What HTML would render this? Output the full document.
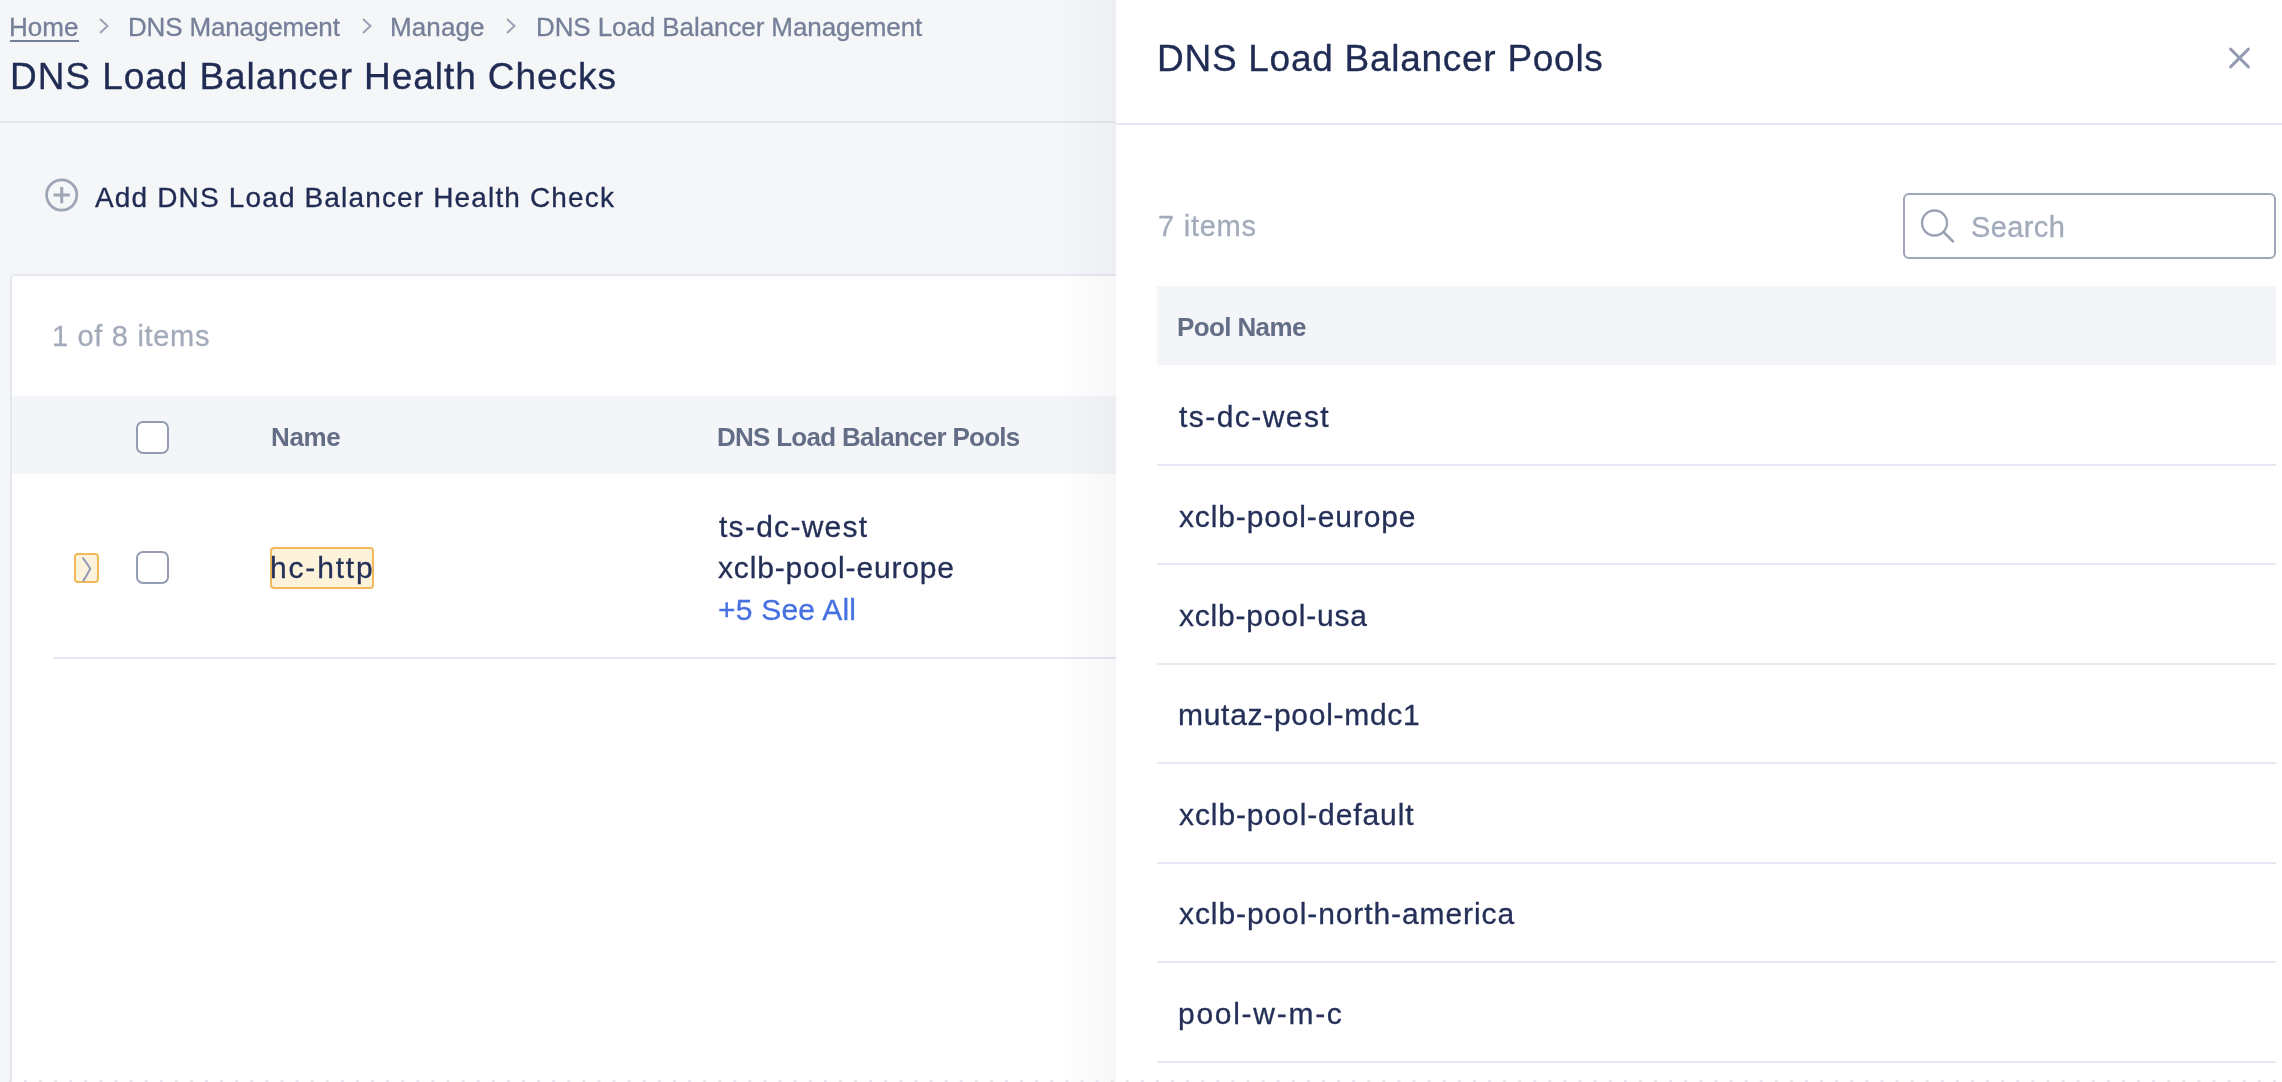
<!DOCTYPE html>
<html>
<head>
<meta charset="utf-8">
<style>
html,body{margin:0;padding:0;}
body{width:2282px;height:1082px;overflow:hidden;position:relative;background:#f5f6f8;font-family:"Liberation Sans",sans-serif;}
.t{position:absolute;white-space:nowrap;line-height:1;will-change:transform;}
.abs{position:absolute;}
.chev{position:absolute;}
#hdrline{left:0;top:121px;width:1116px;height:2px;background:#e4e7ef;}
#card{left:10px;top:274px;width:1200px;height:900px;background:#fff;border:2px solid #e4e7f0;border-radius:5px;box-sizing:border-box;}
#thead{left:12px;top:396px;width:1104px;height:78px;background:#f4f5f8;}
#rowline{left:53px;top:657px;width:1063px;height:2px;background:#e6e9f3;}
.cb{position:absolute;width:33px;height:33px;box-sizing:border-box;border:2px solid #939cb0;border-radius:7px;background:#fff;}
#exp{left:74px;top:553px;width:25px;height:30px;box-sizing:border-box;border:2px solid #f2b85c;border-radius:4px;background:#fdf2da;}
#hcbox{left:270px;top:547px;width:104px;height:42px;box-sizing:border-box;border:2px solid #f2b85c;border-radius:4px;background:#fdf2da;}
#shadow{left:1056px;top:0;width:60px;height:1082px;background:linear-gradient(to right,rgba(30,40,80,0),rgba(30,40,80,0.035));}
#panel{left:1116px;top:0;width:1166px;height:1082px;background:#fff;}
#pline{left:1116px;top:123px;width:1166px;height:2px;background:#e4e7f0;}
#sbox{left:1903px;top:193px;width:373px;height:66px;box-sizing:border-box;border:2px solid #9ea6b7;border-radius:6px;background:#fff;}
#pthead{left:1157px;top:286px;width:1119px;height:79px;background:#f4f5f8;}
.rl{position:absolute;left:1157px;width:1119px;height:2px;background:#e6e9f3;}
#dots{left:0;top:1080px;width:2282px;height:2px;background-image:linear-gradient(to right,#e6e8ed 0,#e6e8ed 3px,transparent 3px);background-size:15.1px 2px;background-position:24px 0;}
</style>
</head>
<body>
<!-- breadcrumb chevrons -->
<svg class="chev" style="left:97px;top:16px" width="14" height="20" viewBox="0 0 14 20"><path d="M3 3 L10.5 10 L3 17" fill="none" stroke="#9aa2b4" stroke-width="2"/></svg>
<svg class="chev" style="left:360px;top:16px" width="14" height="20" viewBox="0 0 14 20"><path d="M3 3 L10.5 10 L3 17" fill="none" stroke="#9aa2b4" stroke-width="2"/></svg>
<svg class="chev" style="left:504px;top:16px" width="14" height="20" viewBox="0 0 14 20"><path d="M3 3 L10.5 10 L3 17" fill="none" stroke="#9aa2b4" stroke-width="2"/></svg>
<div class="abs" style="left:10px;top:40px;width:69px;height:2px;background:#757f98"></div>
<div class="abs" id="hdrline"></div>
<!-- add icon -->
<svg class="abs" style="left:44px;top:177px" width="36" height="36" viewBox="0 0 36 36"><circle cx="17.7" cy="18" r="15.1" fill="none" stroke="#9ea6b6" stroke-width="2.8"/><path d="M17.7 10 V26.3 M9.6 18 H25.8" stroke="#9ea6b6" stroke-width="3"/></svg>
<div class="abs" id="card"></div>
<div class="abs" id="thead"></div>
<div class="cb" style="left:136px;top:421px"></div>
<div class="abs" id="exp"></div>
<svg class="abs" style="left:78px;top:555px" width="18" height="28" viewBox="0 0 18 28"><path d="M4.6 2.6 Q9.5 9 12.3 13.8 Q9.3 19.5 5 26.5" fill="none" stroke="#929bb5" stroke-width="2"/></svg>
<div class="cb" style="left:136px;top:551px"></div>
<div class="abs" id="hcbox"></div>
<div class="abs" id="rowline"></div>
<div class="abs" id="shadow"></div>
<div class="abs" id="panel"></div>
<div class="abs" id="pline"></div>
<svg class="abs" style="left:2226px;top:45px" width="27" height="27" viewBox="0 0 27 27"><path d="M4.6 4.1 L22.4 21.9 M22.4 4.1 L4.6 21.9" stroke="#939cb0" stroke-width="2.9" stroke-linecap="round"/></svg>
<div class="abs" id="sbox"></div>
<svg class="abs" style="left:1918px;top:207px" width="40" height="40" viewBox="0 0 40 40"><circle cx="16.5" cy="16" r="12.5" fill="none" stroke="#9aa2b4" stroke-width="2.3"/><path d="M25.5 25 L35 34.5" stroke="#9aa2b4" stroke-width="2.5" stroke-linecap="round"/></svg>
<div class="abs" id="pthead"></div>
<div class="rl" style="top:464px"></div>
<div class="rl" style="top:563px"></div>
<div class="rl" style="top:663px"></div>
<div class="rl" style="top:762px"></div>
<div class="rl" style="top:862px"></div>
<div class="rl" style="top:961px"></div>
<div class="rl" style="top:1061px"></div>
<div class="abs" id="dots"></div>
<div class="t" id="bc1" style="left:9.00px;top:13.72px;font-size:26px;letter-spacing:-0.000px;color:#757f98;-webkit-text-stroke:0.3px currentColor;">Home</div>
<div class="t" id="bc2" style="left:128.40px;top:13.72px;font-size:26px;letter-spacing:-0.154px;color:#757f98;-webkit-text-stroke:0.3px currentColor;">DNS Management</div>
<div class="t" id="bc3" style="left:390.40px;top:13.72px;font-size:26px;letter-spacing:0.100px;color:#757f98;-webkit-text-stroke:0.3px currentColor;">Manage</div>
<div class="t" id="bc4" style="left:535.60px;top:13.72px;font-size:26px;letter-spacing:-0.093px;color:#757f98;-webkit-text-stroke:0.3px currentColor;">DNS Load Balancer Management</div>
<div class="t" id="title" style="left:10.00px;top:58.00px;font-size:37px;letter-spacing:0.933px;color:#212c54;-webkit-text-stroke:0.3px currentColor;">DNS Load Balancer Health Checks</div>
<div class="t" id="add" style="left:95.20px;top:184.21px;font-size:28px;letter-spacing:1.152px;color:#212c54;-webkit-text-stroke:0.3px currentColor;">Add DNS Load Balancer Health Check</div>
<div class="t" id="count" style="left:52.40px;top:322.01px;font-size:29px;letter-spacing:0.682px;color:#a3abbb;-webkit-text-stroke:0.3px currentColor;">1 of 8 items</div>
<div class="t" id="hname" style="left:270.60px;top:423.90px;font-size:26px;letter-spacing:-0.333px;color:#636e86;font-weight:700;">Name</div>
<div class="t" id="hpools" style="left:717.00px;top:423.50px;font-size:26px;letter-spacing:-0.727px;color:#636e86;font-weight:700;">DNS Load Balancer Pools</div>
<div class="t" id="hc" style="left:269.80px;top:553.41px;font-size:30px;letter-spacing:1.833px;color:#253058;-webkit-text-stroke:0.3px currentColor;">hc-http</div>
<div class="t" id="p1" style="left:718.80px;top:511.91px;font-size:30px;letter-spacing:1.278px;color:#253058;-webkit-text-stroke:0.3px currentColor;">ts-dc-west</div>
<div class="t" id="p2" style="left:717.60px;top:553.31px;font-size:30px;letter-spacing:0.833px;color:#253058;-webkit-text-stroke:0.3px currentColor;">xclb-pool-europe</div>
<div class="t" id="p3" style="left:718.40px;top:594.71px;font-size:30px;letter-spacing:0.222px;color:#4570e1;-webkit-text-stroke:0.3px currentColor;">+5 See All</div>
<div class="t" id="ptitle" style="left:1156.80px;top:39.72px;font-size:37px;letter-spacing:0.727px;color:#212c54;-webkit-text-stroke:0.3px currentColor;">DNS Load Balancer Pools</div>
<div class="t" id="pcount" style="left:1157.60px;top:212.31px;font-size:29px;letter-spacing:0.750px;color:#a3abbb;-webkit-text-stroke:0.3px currentColor;">7 items</div>
<div class="t" id="search" style="left:1971.40px;top:212.51px;font-size:29px;letter-spacing:0.400px;color:#a3abbb;-webkit-text-stroke:0.3px currentColor;">Search</div>
<div class="t" id="phname" style="left:1176.80px;top:314.10px;font-size:26px;letter-spacing:-0.625px;color:#636e86;font-weight:700;">Pool Name</div>
<div class="t" id="r0" style="left:1178.80px;top:402.11px;font-size:30px;letter-spacing:1.444px;color:#253058;-webkit-text-stroke:0.3px currentColor;">ts-dc-west</div>
<div class="t" id="r1" style="left:1178.80px;top:501.53px;font-size:30px;letter-spacing:0.867px;color:#253058;-webkit-text-stroke:0.3px currentColor;">xclb-pool-europe</div>
<div class="t" id="r2" style="left:1178.80px;top:600.94px;font-size:30px;letter-spacing:0.792px;color:#253058;-webkit-text-stroke:0.3px currentColor;">xclb-pool-usa</div>
<div class="t" id="r3" style="left:1177.80px;top:700.37px;font-size:30px;letter-spacing:0.714px;color:#253058;-webkit-text-stroke:0.3px currentColor;">mutaz-pool-mdc1</div>
<div class="t" id="r4" style="left:1178.80px;top:799.78px;font-size:30px;letter-spacing:0.906px;color:#253058;-webkit-text-stroke:0.3px currentColor;">xclb-pool-default</div>
<div class="t" id="r5" style="left:1178.80px;top:899.21px;font-size:30px;letter-spacing:0.909px;color:#253058;-webkit-text-stroke:0.3px currentColor;">xclb-pool-north-america</div>
<div class="t" id="r6" style="left:1177.80px;top:998.63px;font-size:30px;letter-spacing:1.722px;color:#253058;-webkit-text-stroke:0.3px currentColor;">pool-w-m-c</div>
</body>
</html>
